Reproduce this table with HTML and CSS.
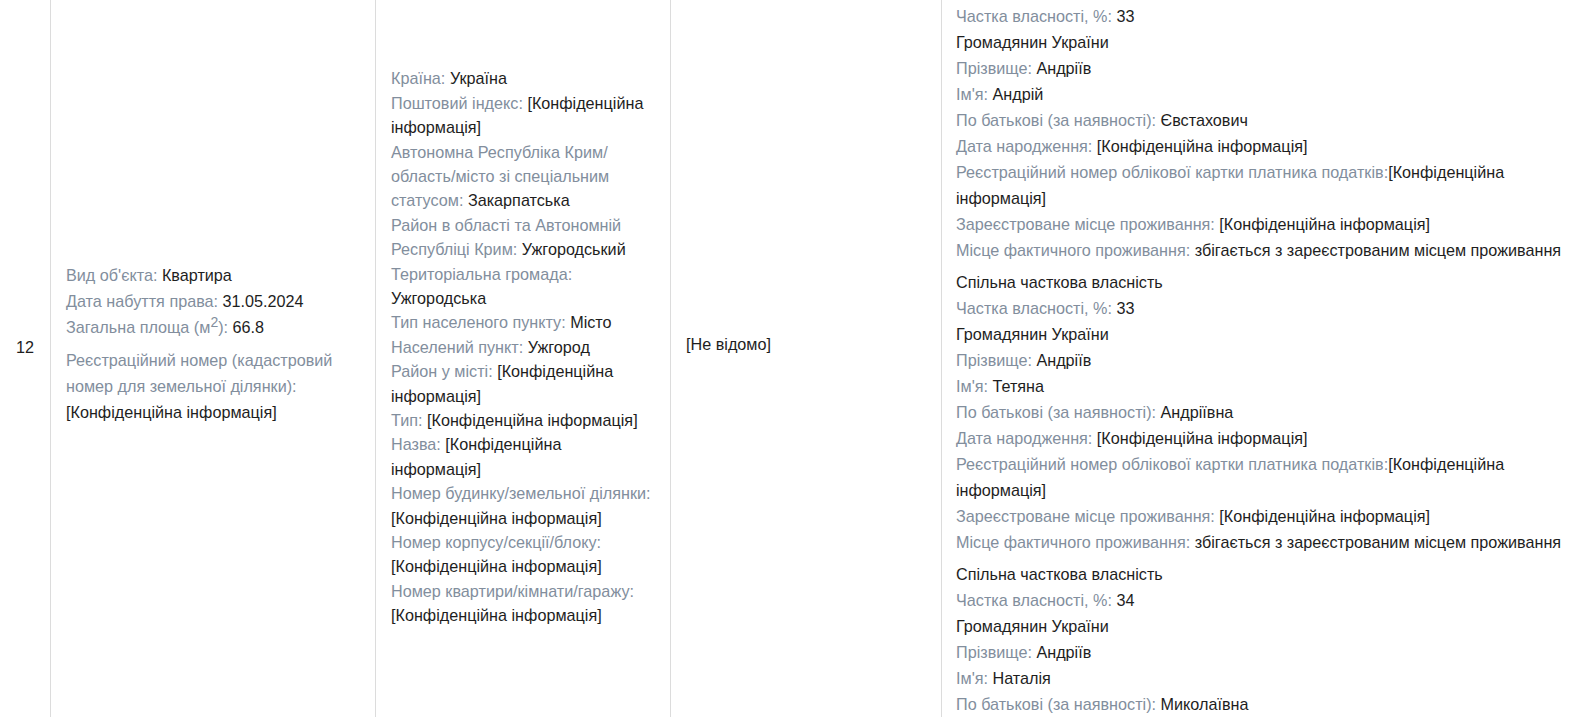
FILE: index.html
```html
<!DOCTYPE html>
<html lang="uk">
<head>
<meta charset="utf-8">
<title>Реєстр</title>
<link rel="stylesheet" href="styles.css">
</head>
<body>
<div class="reg">
  <div class="cell num">12</div>
  <div class="cell obj">
    <div class="grp">
      <div><span class="lb">Вид об'єкта:</span> <span class="v">Квартира</span></div>
      <div><span class="lb">Дата набуття права:</span> <span class="v">31.05.2024</span></div>
      <div><span class="lb">Загальна площа (м<sup>2</sup>):</span> <span class="v">66.8</span></div>
    </div>
    <div class="grp">
      <span class="lb">Реєстраційний номер (кадастровий номер для земельної ділянки):</span> <span class="v">[Конфіденційна інформація]</span>
    </div>
  </div>
  <div class="cell addr">
    <div><span class="lb">Країна:</span> <span class="v">Україна</span></div>
    <div><span class="lb">Поштовий індекс:</span> <span class="v">[Конфіденційна інформація]</span></div>
    <div><span class="lb">Автономна Республіка Крим/ область/місто зі спеціальним статусом:</span> <span class="v">Закарпатська</span></div>
    <div><span class="lb">Район в області та Автономній Республіці Крим:</span> <span class="v">Ужгородський</span></div>
    <div><span class="lb">Територіальна громада:</span> <span class="v">Ужгородська</span></div>
    <div><span class="lb">Тип населеного пункту:</span> <span class="v">Місто</span></div>
    <div><span class="lb">Населений пункт:</span> <span class="v">Ужгород</span></div>
    <div><span class="lb">Район у місті:</span> <span class="v">[Конфіденційна інформація]</span></div>
    <div><span class="lb">Тип:</span> <span class="v">[Конфіденційна інформація]</span></div>
    <div><span class="lb">Назва:</span> <span class="v">[Конфіденційна інформація]</span></div>
    <div><span class="lb">Номер будинку/земельної ділянки:</span> <span class="v">[Конфіденційна інформація]</span></div>
    <div><span class="lb">Номер корпусу/секції/блоку:</span> <span class="v">[Конфіденційна інформація]</span></div>
    <div><span class="lb">Номер квартири/кімнати/гаражу:</span> <span class="v">[Конфіденційна інформація]</span></div>
  </div>
  <div class="cell unk"><span class="v">[Не відомо]</span></div>
  <div class="cell owners">
    <div class="owner">
      <div class="v">Спільна часткова власність</div>
      <div><span class="lb">Частка власності, %:</span> <span class="v">33</span></div>
      <div class="v">Громадянин України</div>
      <div><span class="lb">Прізвище:</span> <span class="v">Андріїв</span></div>
      <div><span class="lb">Ім'я:</span> <span class="v">Андрій</span></div>
      <div><span class="lb">По батькові (за наявності):</span> <span class="v">Євстахович</span></div>
      <div><span class="lb">Дата народження:</span> <span class="v">[Конфіденційна інформація]</span></div>
      <div><span class="lb">Реєстраційний номер облікової картки платника податків:</span><span class="v">[Конфіденційна інформація]</span></div>
      <div><span class="lb">Зареєстроване місце проживання:</span> <span class="v">[Конфіденційна інформація]</span></div>
      <div><span class="lb">Місце фактичного проживання:</span> <span class="v">збігається з зареєстрованим місцем проживання</span></div>
    </div>
    <div class="owner">
      <div class="v">Спільна часткова власність</div>
      <div><span class="lb">Частка власності, %:</span> <span class="v">33</span></div>
      <div class="v">Громадянин України</div>
      <div><span class="lb">Прізвище:</span> <span class="v">Андріїв</span></div>
      <div><span class="lb">Ім'я:</span> <span class="v">Тетяна</span></div>
      <div><span class="lb">По батькові (за наявності):</span> <span class="v">Андріївна</span></div>
      <div><span class="lb">Дата народження:</span> <span class="v">[Конфіденційна інформація]</span></div>
      <div><span class="lb">Реєстраційний номер облікової картки платника податків:</span><span class="v">[Конфіденційна інформація]</span></div>
      <div><span class="lb">Зареєстроване місце проживання:</span> <span class="v">[Конфіденційна інформація]</span></div>
      <div><span class="lb">Місце фактичного проживання:</span> <span class="v">збігається з зареєстрованим місцем проживання</span></div>
    </div>
    <div class="owner">
      <div class="v">Спільна часткова власність</div>
      <div><span class="lb">Частка власності, %:</span> <span class="v">34</span></div>
      <div class="v">Громадянин України</div>
      <div><span class="lb">Прізвище:</span> <span class="v">Андріїв</span></div>
      <div><span class="lb">Ім'я:</span> <span class="v">Наталія</span></div>
      <div><span class="lb">По батькові (за наявності):</span> <span class="v">Миколаївна</span></div>
      <div><span class="lb">Дата народження:</span> <span class="v">[Конфіденційна інформація]</span></div>
      <div><span class="lb">Реєстраційний номер облікової картки платника податків:</span><span class="v">[Конфіденційна інформація]</span></div>
      <div><span class="lb">Зареєстроване місце проживання:</span> <span class="v">[Конфіденційна інформація]</span></div>
      <div><span class="lb">Місце фактичного проживання:</span> <span class="v">збігається з зареєстрованим місцем проживання</span></div>
    </div>
  </div>
</div>
</body>
</html>
```

FILE: styles.css
```css
html, body {
  margin: 0;
  padding: 0;
  background: #fff;
}
body {
  font-family: "Liberation Sans", Arial, sans-serif;
  font-size: 16.2px;
  color: #1e1e1e;
  overflow: hidden;
}
.reg {
  display: grid;
  grid-template-columns: 50px 325px 295px 271px 1fr;
  margin-top: -164px;
}
.cell {
  display: flex;
  flex-direction: column;
  justify-content: center;
  border-left: 1px solid #dcdcdc;
  padding: 10px 15px;
  line-height: 24.4px;
}
.cell.num {
  border-left: none;
  align-items: center;
  padding: 0;
}
.cell.obj {
  line-height: 26px;
  padding-bottom: 18px;
}
.cell.unk {
  padding-bottom: 16px;
}
.lb {
  color: #828e9d;
}
.v {
  color: #1e1e1e;
}
.grp + .grp {
  margin-top: 7px;
}
sup {
  font-size: 14px;
  line-height: 0;
  vertical-align: 6px;
}
.owners {
  justify-content: flex-start;
  padding: 141px 14px 11px 14px;
  line-height: 26px;
}
.owner + .owner {
  margin-top: 6px;
}
```
